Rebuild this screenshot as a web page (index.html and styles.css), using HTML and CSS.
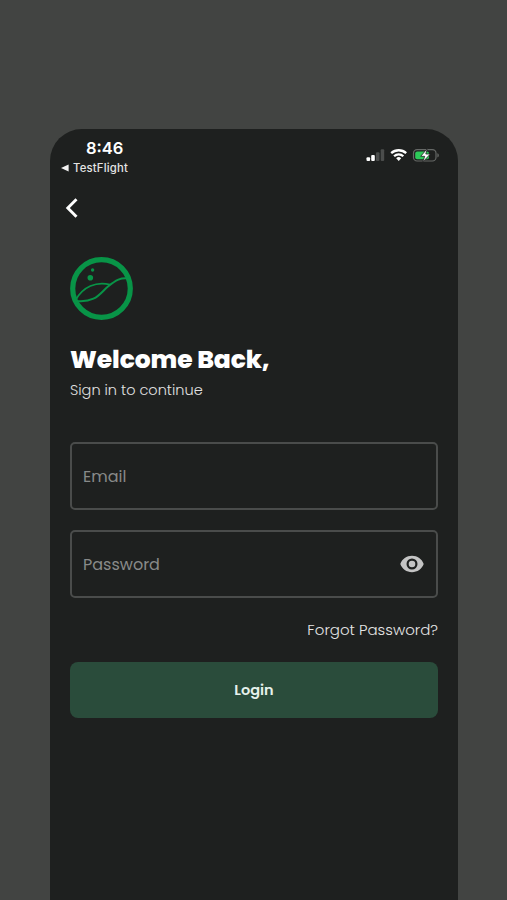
FILE: index.html
```html
<!DOCTYPE html>
<html lang="en">
<head>
<meta charset="utf-8">
<title>Login</title>
<link rel="stylesheet" href="styles.css">
</head>
<body>
<main class="phone">
  <header class="status">
    <div class="status-left">
      <div class="time">8:46</div>
      <div class="return"><svg width="8" height="8" viewBox="0 0 8 8"><path d="M0 4 7.6.4v7.2Z" fill="#f2f2f2"/></svg><span>TestFlight</span></div>
    </div>
    <svg class="indicators" width="74" height="16" viewBox="0 0 74 16">
      <g fill="#fff"><rect x="0.5" y="9.2" width="3.6" height="3.8" rx="1"/><rect x="5.2" y="7" width="3.6" height="6" rx="1"/></g>
      <g fill="#4b4d4c"><rect x="10" y="4.2" width="3.5" height="8.8" rx="1"/><rect x="14.7" y="1.2" width="3.5" height="11.8" rx="1"/></g>
      <g fill="none" stroke="#fff" stroke-width="2.3"><path d="M25.2 5.2a11 11 0 0 1 15 0"/><path d="M28.1 8.2a6.6 6.6 0 0 1 9.2 0"/></g>
      <path d="M30.2 10.3a3.6 3.6 0 0 1 5 0l-2.5 2.6Z" fill="#fff"/>
      <rect x="47.5" y="1.7" width="22.5" height="11.3" rx="3.6" fill="none" stroke="#666967" stroke-width="1.2"/>
      <path d="M71.4 5.3c1.9.6 1.9 3.6 0 4.2Z" fill="#666967"/>
      <rect x="49.2" y="3.4" width="13.8" height="7.9" rx="2" fill="#2dca59"/>
      <path d="M61.4.5 54.7 8.3h4l-2 5.9 7.6-8.2h-4.5Z" fill="#fff" stroke="#1e201f" stroke-width=".8"/>
    </svg>
  </header>
  <svg class="back" width="14" height="22" viewBox="0 0 14 22"><path d="M11.5 2.2 2.8 11l8.7 8.8" fill="none" stroke="#fff" stroke-width="2.9"/></svg>
  <section class="content">
    <svg class="logo" width="64" height="64" viewBox="0 0 64 64" fill="none" stroke="#089447">
      <circle cx="31.5" cy="31.5" r="28.8" stroke-width="5.2"/>
      <path d="M6 42.5C13 30 26 24 40 27.6" stroke-width="1.7"/>
      <path d="M6 44C26 46 30 36 38 29.5S51 20.5 58 21.5" stroke-width="2"/>
      <circle cx="20.3" cy="20.7" r="2.8" fill="#089447" stroke="none"/>
      <circle cx="22.6" cy="13" r="1.7" fill="#089447" stroke="none"/>
    </svg>
    <h1><span>Welcome Back,</span></h1>
    <p class="subtitle">Sign in to continue</p>
    <div class="field"><span class="email">Email</span></div>
    <div class="field"><span class="password">Password</span>
      <svg width="24" height="18" viewBox="0 0 24 18"><path fill="#c4c4c4" fill-rule="evenodd" d="M12 .8C6.6.8 2 4.1.3 9c1.7 4.9 6.3 8.2 11.7 8.2S22 13.9 23.700 9C22 4.100 17.400.8 12 .8ZM12 14.500a5.500 5.500 0 1 1 0-11 5.500 5.500 0 0 1 0 11ZM12 5.700a3.300 3.300 0 1 0 0 6.600 3.300 3.300 0 0 0 0-6.600Z"/></svg>
    </div>
    <div class="forgot">Forgot Password?</div>
    <button class="login">Login</button>
  </section>
</main>
</body>
</html>
```
FILE: styles.css
```css
* { box-sizing: border-box; }
body {
  margin: 0;
  height: 900px;
  overflow: hidden;
  padding: 129px 49px 0 50px;
  background: #424442;
  font-family: Poppins, Inter, sans-serif;
  color: #fff;
}
.phone {
  height: 771px;
  background: #1e201f;
  border-radius: 32px 32px 0 0;
}
.status {
  height: 68px;
  display: flex;
  justify-content: space-between;
  padding: 9px 18px 0 11px;
  font-family: Inter, sans-serif;
}
.time {
  padding-left: 25px;
  font-size: 16.5px;
  line-height: 20px;
  font-weight: 600;
}
.return {
  display: flex;
  align-items: center;
  gap: 4px;
  margin-top: 2px;
  font-size: 11.3px;
  line-height: 16px;
  font-weight: 500;
  letter-spacing: .2px;
  color: #e4e4e4;
}
.indicators { margin-top: 10px; }
.back { display: block; margin-left: 15px; }
.content { padding: 38px 20px 0; }
.logo { display: block; }
h1 {
  margin: 20px 0 0;
  font-size: 25px;
  line-height: 38px;
  font-weight: 800;
  letter-spacing: -.1px;
  white-space: nowrap;
}
.subtitle {
  margin: 0 0 41px;
  font-size: 14.5px;
  line-height: 22px;
  font-weight: 300;
  color: #e1e1e1;
}
.field {
  height: 68px;
  margin-bottom: 20px;
  padding: 0 12px 0 11px;
  display: flex;
  align-items: center;
  justify-content: space-between;
  border: 2px solid #4a4c4b;
  border-radius: 5px;
  font-size: 16px;
  color: #888a89;
}
.forgot {
  margin-top: 21px;
  text-align: right;
  font-size: 15px;
  line-height: 22px;
  font-weight: 300;
  color: #e5e5e5;
}
.login {
  display: block;
  width: 100%;
  height: 56px;
  margin-top: 21px;
  border: 0;
  border-radius: 8px;
  background: #2a4c3b;
  color: #e6f1eb;
  font: 600 14.500px Poppins, Inter, sans-serif;
}
```
